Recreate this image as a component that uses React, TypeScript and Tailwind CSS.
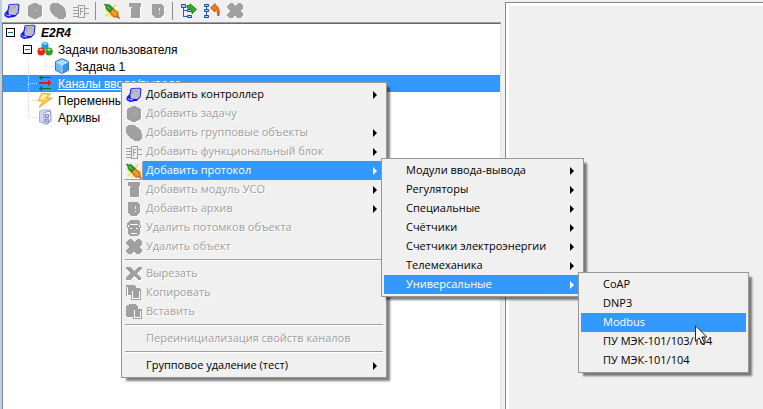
import type { ReactNode } from "react";
import { cx } from "class-variance-authority";

type IconProps = { children: ReactNode; crisp?: boolean };

function Icon({ children, crisp }: IconProps) {
  return (
    <svg
      viewBox="0 0 16 16"
      className="h-4 w-4 shrink-0"
      shapeRendering={crisp ? "crispEdges" : "auto"}
      aria-hidden="true"
    >
      {children}
    </svg>
  );
}

const ControllerIcon = () => (
  <Icon>
    <path d="M4.500 1.800 6.500 1 14 .7 15.500 2.200 14.600 10 11 13.700 4 15 .5 13V10.300L3.500 7Z" fill="#1414f0" />
    <path d="M5.500 2.300 7 1.700l6.300-.2 1.200 1.400-.8 6.100-2.400 2.400-6-.2-1-2.400Z" fill="#b9bcc6" />
    <path d="m1.600 11 1.800 1.600 3.400.1" stroke="#c4ceff" fill="none" />
    <path d="m4.500 10.800 6.700.6 2.600-2.600" stroke="#e9e9ee" strokeWidth=".8" fill="none" />
    <path d="m9 3.500 2.800 1M6.200 7l1-3.500" stroke="#8d91a4" strokeWidth=".8" fill="none" />
  </Icon>
);

const HexIcon = () => (
  <Icon crisp>
    <path d="M8 1h2l6 3v9l-5 3H7l-5-3V4l5-3Z" fill="#fff" />
    <path d="M7 0h2l6 3v10l-6 3H7l-6-3V3Z" fill="#a0a0a0" />
    <path d="M8 7h1v1H8z" fill="#eee" />
  </Icon>
);

const GroupIcon = () => (
  <Icon crisp>
    <path d="M2 2h6l6 4 2 3v5l-2 2H9l-5-4-3-4Z" fill="#fff" />
    <path d="M0 2 2 0h6l6 4 2 5v4l-2 3H9l-6-4-3-5Z" fill="#a0a0a0" />
  </Icon>
);

const BlockIcon = () => (
  <Icon crisp>
    <path d="M5.500 2.500h6v12h-6zM0 4.500h5M0 7.500h5M0 10.500h5M0 13.500h5M12 5.500h4M12 10.500h4" fill="none" stroke="#a0a0a0" />
    <path d="M7.500 12V5.500H10M8 8.500h2" fill="none" stroke="#a0a0a0" />
  </Icon>
);

const PlugIcon = () => (
  <Icon>
    <path d="M12 1.500 9 5M2 13l3-3M15 8.500h-3M2 8h2M6 14l1-2" stroke="#f6df22" strokeWidth="1.500" />
    <path d="m.5 1 2.300 2.500" stroke="#277812" strokeWidth="1.500" />
    <path d="m2 2 3-.5 4.500 4L5.600 9.500 2 5.500Z" fill="#279c20" stroke="#167016" strokeWidth=".7" />
    <path d="m3 3 3 3" stroke="#81df55" />
    <path d="m9.500 5.600 4.500 4 .3 2.800-1.700 1.800-3.300-.3-3.700-4.300Z" fill="#ef8a20" stroke="#a94e0d" strokeWidth=".7" />
    <path d="m8 8 4 4" stroke="#ffc34e" />
    <path d="m13 13 2.500 2.500" stroke="#a94e0d" strokeWidth="1.500" />
  </Icon>
);

const ModuleIcon = () => (
  <Icon crisp>
    <path d="M3 1h12v4h-1v11H4V5H3Z" fill="#fff" />
    <path d="M2 0h12v4h-1v11H4V4H2Z" fill="#a0a0a0" />
    <path d="M4 4h1v1H4z" fill="#eee" />
  </Icon>
);

const ArchiveIcon = () => (
  <Icon crisp>
    <path d="M3 2h11l1 2v8l-4 4H7l-5-4Z" fill="#fff" />
    <path d="M2 1h9l3 2v9l-4 3H6l-4-3Z" fill="#a0a0a0" />
    <path d="M9 5h1v3H9zM9 10h1v1H9z" fill="#eee" />
  </Icon>
);

const TrashIcon = () => (
  <Icon crisp>
    <path d="M4 0h8l2 2v3h1v3h-1v5l-2 3H4l-2-3V8H1V3h1Z" fill="#a0a0a0" />
    <path d="M4 4h8v1H4zM4 8h2v1H4zM10 8h2v1h-2zM5 13h6v1H5zM2 5h1v2H2zM13 5h1v2h-1z" fill="#fff" />
  </Icon>
);

const CrossIcon = () => (
  <Icon crisp>
    <path d="M4 1h2l3 3 3-3h2l2 3-4 4 4 4-2 3h-2l-3-3-3 3H4l-2-3 4-4-4-4Z" fill="#fff" />
    <path d="M3 0h2l3 3 3-3h2l3 3v2l-3 3 3 3v2l-3 2h-2l-3-2-3 2H3l-3-2v-2l3-3-3-3V3Z" fill="#a0a0a0" />
  </Icon>
);

const CutIcon = () => (
  <Icon crisp>
    <path d="M1 2h3l4 4 5-4h3v1l-5 5 5 6v2h-3L8 11l-3 4H1l-1-2 4-5-4-4Z" fill="#fff" />
    <path d="M0 1h4l4 4 5-4h3v1l-5 5 4 5v2h-2L8 10l-4 4H0v-3l5-4-5-4Z" fill="#a0a0a0" />
  </Icon>
);

const CopyIcon = () => (
  <Icon crisp>
    <path d="M0 0h8l2 2v9H0z" fill="#a0a0a0" />
    <path d="M5 3h8l2 2v10H5z" fill="#a0a0a0" />
    <path d="M1 2h1v8h3v1H1zM6 6h1v7h7v1H6zM13 6h1v8h-1z" fill="#fff" />
  </Icon>
);

const PasteIcon = () => (
  <Icon crisp>
    <path d="M0 2 4 0h5l3 2v3h4v10H7v-2H1L0 11Z" fill="#a0a0a0" />
    <path d="M8 6h1v7h5v1H8zM14 7h1v7h-1z" fill="#fff" />
  </Icon>
);

const ExpandTreeIcon = () => (
  <Icon>
    <path d="M2.500 3v11M3 7.500h4M3 13.500h4" stroke="#285db8" fill="none" />
    <path d="M.5 1.500h4v3h-4zM6.500 6.500h4v2h-4zM6.500 12.500h4v2h-4z" fill="#a8d6ff" stroke="#164fa8" />
    <path d="M6 2.500h3V.8l6.500 5.500L11 11V8.500c0-2-2-3.500-5-3.500Z" fill="#35ad27" stroke="#167a12" strokeWidth=".8" />
  </Icon>
);

const CollapseTreeIcon = () => (
  <Icon>
    <path d="M2.500 3v11" stroke="#285db8" />
    <path d="M.5 1.500h4v2h-4zM.5 6.500h4v2h-4zM.5 12.500h4v2h-4z" fill="#a8d6ff" stroke="#164fa8" />
    <path d="M11 .5v2c3 0 5 4 4 10h-1.500c0-4-.5-5.500-2.500-5.500v2L6.500 5Z" fill="#ef7c20" stroke="#a84508" strokeWidth=".8" />
  </Icon>
);

const TasksIcon = () => (
  <Icon>
    <path d="M8 1c2.500 0 3.500 1 3.500 3.500S10.500 8.500 8 8.500s-3.500-1.500-3.500-4S5.500 1 8 1Z" fill="#1b9ae6" />
    <path d="m5.500 2.500 2.500-1 2.500 1L8 4Z" fill="#93ecff" />
    <path d="M4 6.500c2.500 0 4 1.500 4 4s-1 4-3.800 4S.5 13 .5 10.500s1-4 3.500-4Z" fill="#e1260d" />
    <path d="m1.800 8.300 2.200-.8 2.200 1L4 10Z" fill="#ffb184" />
    <path d="M12 6.500c2.500 0 3.700 1.500 3.700 4s-1 4-3.700 4-3.700-1.500-3.700-4 1.200-4 3.700-4Z" fill="#27a22b" />
    <path d="m9.800 8.500 2.200-1 2.200 1L12 10Z" fill="#a6f080" />
  </Icon>
);

const TaskIcon = () => (
  <Icon>
    <path d="m8 .6 6.500 3v8.700L8 15.500l-6.500-3.200V3.600Z" fill="#3b94e5" stroke="#1a5eb4" strokeWidth=".8" />
    <path d="m8 1.300 6 2.700-6 3-6-3Z" fill="#a6dcff" />
    <path d="M8 7v8l-6-3V4Z" fill="#69b9f8" />
    <path d="m2 4 6 3 6-3M8 7v8" stroke="#d3f0ff" fill="none" strokeWidth=".8" />
  </Icon>
);

const ChannelsIcon = () => (
  <Icon crisp>
    <path d="M3 2h11v1H3zM3 13h11v1H3zM2 2.500 5 0v5ZM2 13.500 5 11v5Z" fill="#08780d" />
    <path d="M2 7h12v2H2zM11 5l4 3-4 3Z" fill="#ee1616" />
  </Icon>
);

const BoltIcon = () => (
  <Icon>
    <path d="M4.500 1.500h9L10 6h5.500L2 15.500 6 9H.8Z" fill="#ffcf45" stroke="#e0a23c" strokeWidth=".8" />
    <path d="M5.500 2.500h5l-4 5H2.500Z" fill="#fff0a8" />
  </Icon>
);

const CabinetIcon = () => (
  <Icon>
    <path d="m2.500 2.500 3-1.500h8l.5 11-4 3-7.500-2Z" fill="#d0d6f3" stroke="#9aa2d0" strokeWidth=".8" />
    <path d="M7 3.500 13.500 2l.5 10-4 3-3-.5Z" fill="#f0f2fd" stroke="#7f88bc" strokeWidth=".8" />
    <path d="M8.500 5.500h3v3h-3zM8.500 10h3v3h-3z" fill="#c6cdf0" stroke="#68719f" strokeWidth=".8" />
  </Icon>
);

type Entry = {
  label: string;
  icon?: ReactNode;
  disabled?: boolean;
  active?: boolean;
  arrow?: boolean;
  pointer?: boolean;
  items?: Entry[];
  className?: string;
};

const protocolTypes: Entry[] = [
  { label: "CoAP" },
  { label: "DNP3" },
  { label: "Modbus", active: true, pointer: true },
  { label: "ПУ МЭК-101/103/104" },
  { label: "ПУ МЭК-101/104" },
];

const protocolGroups: Entry[] = [
  { label: "Модули ввода-вывода", arrow: true },
  { label: "Регуляторы", arrow: true },
  { label: "Специальные", arrow: true },
  { label: "Счётчики", arrow: true },
  { label: "Счетчики электроэнергии", arrow: true },
  { label: "Телемеханика", arrow: true },
  { label: "Универсальные", arrow: true, active: true, items: protocolTypes, className: "w-[171px]" },
];

const menu: (Entry | null)[] = [
  { label: "Добавить контроллер", icon: <ControllerIcon />, arrow: true },
  { label: "Добавить задачу", icon: <HexIcon />, disabled: true },
  { label: "Добавить групповые объекты", icon: <GroupIcon />, disabled: true, arrow: true },
  { label: "Добавить функциональный блок", icon: <BlockIcon />, disabled: true, arrow: true },
  { label: "Добавить протокол", icon: <PlugIcon />, arrow: true, active: true, items: protocolGroups, className: "w-[203px]" },
  { label: "Добавить модуль УСО", icon: <ModuleIcon />, disabled: true, arrow: true },
  { label: "Добавить архив", icon: <ArchiveIcon />, disabled: true, arrow: true },
  { label: "Удалить потомков объекта", icon: <TrashIcon />, disabled: true },
  { label: "Удалить объект", icon: <CrossIcon />, disabled: true },
  null,
  { label: "Вырезать", icon: <CutIcon />, disabled: true },
  { label: "Копировать", icon: <CopyIcon />, disabled: true },
  { label: "Вставить", icon: <PasteIcon />, disabled: true },
  null,
  { label: "Переинициализация свойств каналов", disabled: true },
  null,
  { label: "Групповое удаление (тест)", arrow: true },
];

function Menu({ items, className }: { items: (Entry | null)[]; className?: string }) {
  return (
    <ul
      role="menu"
      className={cx(
        "absolute border border-[#979797] bg-[#f0f0f0] p-0.5 font-['Open_Sans','Noto_Sans',sans-serif] text-[11px] text-black shadow-[4px_4px_2px_-1px_rgba(0,0,0,0.5)]",
        className
      )}
    >
      {items.map((item, i) =>
        item ? (
          <MenuItem key={item.label} item={item} />
        ) : (
          <li key={i} role="separator" className="flex h-2 items-center px-px">
            <span className="h-0.5 flex-1 border-t border-b border-t-[#a0a0a0] border-b-white" />
          </li>
        )
      )}
    </ul>
  );
}

function MenuItem({ item }: { item: Entry }) {
  return (
    <li role="none" className="relative">
      <button
        type="button"
        role="menuitem"
        disabled={item.disabled}
        aria-haspopup={item.arrow ? "menu" : undefined}
        className={cx(
          "flex h-[19px] w-full items-center text-left whitespace-nowrap",
          item.disabled && "text-[#a0a0a0] [text-shadow:1px_1px_0_#fff]",
          item.active && "text-white",
          item.active && !item.icon && "bg-[#3399ff]"
        )}
      >
        <span
          className={cx(
            "flex h-[19px] w-[19px] shrink-0 items-center justify-center",
            item.active && item.icon && "border border-t-white border-r-[#a0a0a0] border-b-[#a0a0a0] border-l-white"
          )}
        >
          {item.icon}
        </span>
        <span className={cx("flex h-full flex-1 items-center justify-between pr-[7px] pl-[3px]", item.active && "bg-[#3399ff]")}>
          <span>{item.label}</span>
          {item.arrow && (
            <svg viewBox="0 0 4 8" className={cx("h-2 w-1", item.active ? "text-white" : "text-black")} aria-hidden="true">
              <path d="M0 0v8l4-4Z" fill="currentColor" />
            </svg>
          )}
        </span>
      </button>
      {item.items && <Menu items={item.items} className={cx("-top-[3px] left-full -ml-[3px]", item.className)} />}
      {item.pointer && (
        <svg viewBox="0 0 13 20" className="absolute top-3 left-[114px] z-10 h-5 w-[13px]" aria-hidden="true">
          <path d="M.5.8v15.500l3.700-3.500 2.800 6 2.500-1.100-2.700-5.700h5Z" fill="#fff" stroke="#1b2733" />
        </svg>
      )}
    </li>
  );
}

const toolbar: { label: string; icon: ReactNode; disabled?: boolean }[][] = [
  [
    { label: "Добавить контроллер", icon: <ControllerIcon /> },
    { label: "Добавить задачу", icon: <HexIcon />, disabled: true },
    { label: "Добавить групповые объекты", icon: <GroupIcon />, disabled: true },
    { label: "Добавить функциональный блок", icon: <BlockIcon />, disabled: true },
  ],
  [
    { label: "Добавить протокол", icon: <PlugIcon /> },
    { label: "Добавить модуль УСО", icon: <ModuleIcon />, disabled: true },
    { label: "Добавить архив", icon: <ArchiveIcon />, disabled: true },
  ],
  [
    { label: "Развернуть", icon: <ExpandTreeIcon /> },
    { label: "Свернуть", icon: <CollapseTreeIcon /> },
    { label: "Удалить объект", icon: <CrossIcon />, disabled: true },
  ],
];

function Toolbar() {
  return (
    <div role="toolbar" className="flex h-[22px] items-center pl-0.5">
      {toolbar.map((group, i) => (
        <div key={i} className={cx("flex h-[18px] items-center gap-[7px]", i > 0 && "ml-1.5 border-l border-[#8c8c8c] pl-2")}>
          {group.map((tool) => (
            <button key={tool.label} type="button" aria-label={tool.label} disabled={tool.disabled}>
              {tool.icon}
            </button>
          ))}
        </div>
      ))}
    </div>
  );
}

type Guide = "none" | "line" | "tee" | "end" | "box";

type TreeRow = { label: string; icon: ReactNode; guides: Guide[]; root?: boolean; selected?: boolean };

const rows: TreeRow[] = [
  { label: "E2R4", icon: <ControllerIcon />, guides: ["box"], root: true },
  { label: "Задачи пользователя", icon: <TasksIcon />, guides: ["none", "box"] },
  { label: "Задача 1", icon: <TaskIcon />, guides: ["none", "line", "end"] },
  { label: "Каналы ввода/вывода", icon: <ChannelsIcon />, guides: ["none", "tee"], selected: true },
  { label: "Переменные", icon: <BoltIcon />, guides: ["none", "tee"] },
  { label: "Архивы", icon: <CabinetIcon />, guides: ["none", "end"] },
];

function GuideCell({ kind }: { kind: Guide }) {
  if (kind === "none") return <span className="w-[17px] shrink-0" />;
  if (kind === "box") {
    return (
      <span className="flex w-[17px] shrink-0 items-center pl-[3px]">
        <button type="button" aria-label="Свернуть" className="flex h-[9px] w-[9px] items-center justify-center border border-black bg-white">
          <span className="h-px w-[5px] bg-[#008080]" />
        </button>
      </span>
    );
  }
  return (
    <span className="flex w-[17px] shrink-0 flex-col pl-2">
      <span className={cx("h-[9px] border-l border-dotted border-[#dcdcdc]", kind !== "line" && "border-b")} />
      <span className={cx("h-2 border-dotted border-[#dcdcdc]", kind !== "end" && "border-l")} />
    </span>
  );
}

function ProjectTree() {
  return (
    <ul
      role="tree"
      className="flex-1 border-t border-r border-l border-t-[#696969] border-r-[#e3e3e3] border-l-[#828790] bg-white font-['Liberation_Sans',Arial,sans-serif] text-xs text-black"
    >
      {rows.map((row) => (
        <li
          key={row.label}
          role="treeitem"
          aria-selected={!!row.selected}
          className={cx("flex h-[17px]", row.selected && "bg-[#3399ff] outline outline-dotted -outline-offset-1 outline-[#cc6600]")}
        >
          {row.guides.map((kind, i) => (
            <GuideCell key={i} kind={kind} />
          ))}
          {row.icon}
          <span
            className={cx(
              "ml-[5px] leading-[19px] whitespace-nowrap",
              row.root && "font-bold italic",
              row.selected && "text-white underline"
            )}
          >
            {row.label}
          </span>
        </li>
      ))}
    </ul>
  );
}

export default function App() {
  return (
    <main className="relative flex min-h-screen overflow-hidden bg-[#f0f0f0]">
      <div className="flex w-[66.2%] shrink-0 flex-col border-l-2 border-[#bcd0e8] pr-1">
        <Toolbar />
        <div className="flex flex-1 border-t border-[#a0a0a0]">
          <ProjectTree />
        </div>
      </div>
      <section className="mt-0.5 flex-1 border-t border-l border-[#828790]">
        <div className="h-full border-t-[3px] border-l-[3px] border-white" />
      </section>
      <Menu items={menu} className="top-[82px] left-[121px] w-[266px]" />
    </main>
  );
}
